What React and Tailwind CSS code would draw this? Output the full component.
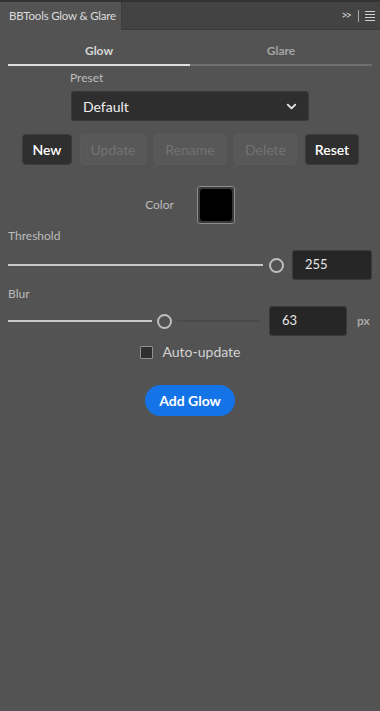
import { ChevronDown } from "lucide-react";

const font = { fontFamily: "Lato, 'Open Sans', sans-serif" };

function ActionButton({ label, width, disabled }) {
  return (
    <button
      className={`h-[31px] rounded-[4px] border text-[14px] ${width} ${
        disabled
          ? "bg-[#585858] border-[#5b5b5b] text-[#727272]"
          : "bg-[#2f2f2f] border-[#3c3c3c] text-white font-semibold"
      }`}
    >
      {label}
    </button>
  );
}

function NumberBox({ value, width }) {
  return (
    <div
      className={`h-[30px] ${width} rounded-[3px] bg-[#262626] border border-[#3a3a3a] flex items-center pl-[12px] text-[13px] text-[#e6e6e6]`}
    >
      {value}
    </div>
  );
}

function Thumb() {
  return <div className="w-[15px] h-[15px] rounded-full border-2 border-[#bdbdbd] shrink-0" />;
}

export default function App() {
  return (
    <div className="w-[380px] h-[711px] bg-[#535353] flex flex-col" style={font}>
      {/* panel header */}
      <div className="h-[30px] border-t-2 border-[#323232] flex shrink-0">
        <div className="w-[122px] bg-[#535353] border-r border-[#3d3d3d] flex items-center pl-[9px] text-[11.5px] text-[#dcdcdc] whitespace-nowrap tracking-[-0.2px]">
          BBTools Glow &amp; Glare
        </div>
        <div className="flex-1 bg-[#434343] border-b border-[#3a3a3a] flex items-center justify-end pr-[5px] gap-[6px]">
          <span className="text-[11px] text-[#cfcfcf] tracking-[-2px] pr-[2px]">&gt;&gt;</span>
          <div className="w-px h-[12px] bg-[#a8a8a8]" />
          <div className="flex flex-col gap-[2px] w-[10px]">
            <div className="h-px bg-[#cfcfcf]" />
            <div className="h-px bg-[#cfcfcf]" />
            <div className="h-px bg-[#cfcfcf]" />
            <div className="h-px bg-[#cfcfcf]" />
          </div>
        </div>
      </div>

      {/* tabs */}
      <div className="mx-[8px] grid grid-cols-2">
        <div className="flex flex-col items-center">
          <span className="pt-[13px] text-[12px] leading-[16px] font-bold text-[#d8d8d8]">Glow</span>
          <div className="mt-[5px] h-[2px] w-full bg-[#dedede]" />
        </div>
        <div className="flex flex-col items-center">
          <span className="pt-[13px] text-[12px] leading-[16px] font-bold text-[#a3a3a3]">Glare</span>
          <div className="mt-[5px] h-[2px] w-full bg-[#6e6e6e]" />
        </div>
      </div>

      {/* preset */}
      <div className="ml-[70px] mt-[4px] text-[12px] leading-[16px] text-[#bcbcbc]">Preset</div>
      <div className="ml-[71px] mt-[5px] w-[238px] h-[30px] rounded-[3px] bg-[#2e2e2e] border border-[#393939] flex items-center justify-between pl-[11px] pr-[9px]">
        <span className="text-[14px] text-[#f0f0f0]">Default</span>
        <ChevronDown size={15} strokeWidth={3} color="#e6e6e6" />
      </div>

      {/* preset actions */}
      <div className="ml-[22px] mt-[13px] flex gap-[8px]">
        <ActionButton label="New" width="w-[50px]" />
        <ActionButton label="Update" width="w-[66px]" disabled />
        <ActionButton label="Rename" width="w-[72px]" disabled />
        <ActionButton label="Delete" width="w-[63px]" disabled />
        <ActionButton label="Reset" width="w-[54px]" />
      </div>

      {/* color */}
      <div className="mt-[21px] flex justify-center items-center gap-[23px]">
        <span className="text-[12px] text-[#bcbcbc]">Color</span>
        <div className="w-[38px] h-[38px] rounded-[3px] border border-[#8e8e8e] bg-[#3a3a3a] p-[2px]">
          <div className="w-full h-full rounded-[3px] bg-black" />
        </div>
      </div>

      {/* threshold */}
      <div className="ml-[8px] mt-[4px] text-[12px] leading-[16px] text-[#bcbcbc]">Threshold</div>
      <div className="ml-[8px] mt-[6px] flex items-center">
        <div className="w-[255px] h-[2px] bg-[#c8c8c8]" />
        <div className="ml-[6px]">
          <Thumb />
        </div>
        <div className="ml-[8px]">
          <NumberBox value="255" width="w-[80px]" />
        </div>
      </div>

      {/* blur */}
      <div className="ml-[8px] mt-[6px] text-[12px] leading-[16px] text-[#bcbcbc]">Blur</div>
      <div className="ml-[8px] mt-[4px] flex items-center">
        <div className="w-[144px] h-[2px] bg-[#c8c8c8]" />
        <div className="ml-[5px]">
          <Thumb />
        </div>
        <div className="ml-[5px] w-[83px] h-[2px] bg-[#4a4a4a]" />
        <div className="ml-[9px]">
          <NumberBox value="63" width="w-[78px]" />
        </div>
        <span className="ml-[10px] text-[12px] font-bold text-[#a8a8a8]">px</span>
      </div>

      {/* auto update */}
      <div className="mt-[9px] flex justify-center items-center gap-[10px]">
        <div className="w-[13px] h-[13px] border border-[#909090] bg-[#2f2f2f] rounded-[1px]" />
        <span className="text-[14px] leading-[14px] text-[#d4d4d4]">Auto-update</span>
      </div>

      {/* add */}
      <div className="mt-[26px] flex justify-center">
        <button className="w-[90px] h-[31px] rounded-full bg-[#1473e6] text-white text-[14px] font-bold">
          Add Glow
        </button>
      </div>
    </div>
  );
}
